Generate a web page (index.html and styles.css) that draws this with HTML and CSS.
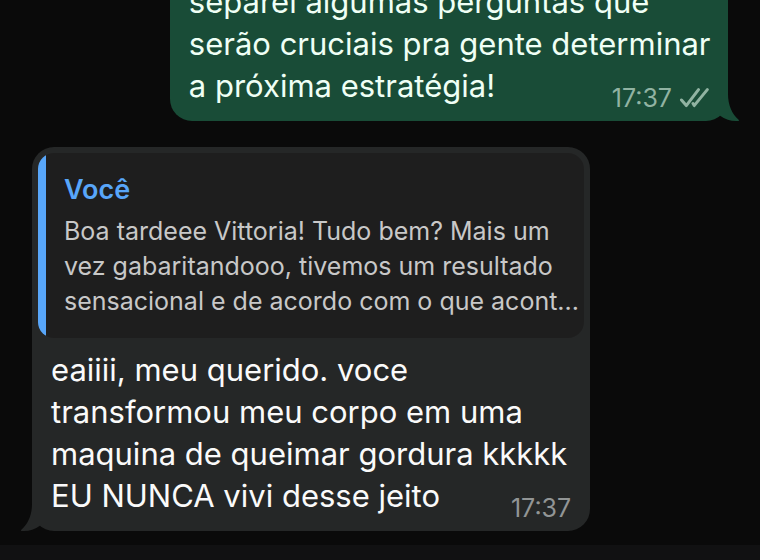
FILE: index.html
```html
<!DOCTYPE html>
<html lang="pt-BR">
<head>
<meta charset="utf-8">
<meta name="viewport" content="width=device-width, initial-scale=1">
<title>Conversa</title>
<link rel="stylesheet" href="styles.css">
</head>
<body>
<div class="screen">
  <main class="chat">
    <article class="bubble outgoing">
      <p class="message">separei algumas perguntas que<br>serão cruciais pra gente determinar<br>a próxima estratégia!</p>
      <div class="meta">
        <time>17:37</time>
        <svg class="checks" viewBox="0 0 30 20" aria-hidden="true">
          <path d="M2.5 12 L7.3 17.6 L19.5 1.6 M14 15.6 L15.2 17.6 L28.3 1.6"/>
        </svg>
      </div>
      <svg class="tail" viewBox="0 0 30 36" aria-hidden="true">
        <path d="M8 0 H18 V8 C18 19 22 28 28.4 33.4 Q30 35 27.5 35 Q18 35.5 10.5 30 L8 28 Z"/>
      </svg>
    </article>
    <article class="bubble incoming">
      <blockquote class="quote">
        <strong class="author">Você</strong>
        <p class="excerpt">Boa tardeee Vittoria! Tudo bem? Mais um<br>vez gabaritandooo, tivemos um resultado<br>sensacional e de acordo com o que acont...</p>
      </blockquote>
      <p class="message">eaiiii, meu querido. voce<br>transformou meu corpo em uma<br>maquina de queimar gordura kkkkk<br>EU NUNCA vivi desse jeito</p>
      <div class="meta"><time>17:37</time></div>
      <svg class="tail" viewBox="0 0 30 36" aria-hidden="true">
        <path d="M8 0 H18 V8 C18 19 22 28 28.4 33.4 Q30 35 27.5 35 Q18 35.5 10.5 30 L8 28 Z"/>
      </svg>
    </article>
  </main>
  <footer class="dock"></footer>
</div>
</body>
</html>
```
FILE: styles.css
```css
* {
  box-sizing: border-box;
}

body {
  margin: 0;
  background: #0a0a0a;
  color: #fafafa;
  font-family: Inter, "Liberation Sans", sans-serif;
}

p,
blockquote {
  margin: 0;
}

.screen {
  display: flex;
  flex-direction: column;
  height: 100vh;
  overflow: hidden;
}

.chat {
  flex: 1;
  display: flex;
  flex-direction: column;
  justify-content: flex-end;
  gap: 26px;
  min-height: 0;
  padding: 0 32px 14px;
}

.bubble {
  position: relative;
  flex: none;
  width: 80.2%;
  border-radius: 22px;
}

.outgoing {
  align-self: flex-end;
  padding: 14px 19px;
  background: #194c37;
  color: #effff5;
}

.incoming {
  padding: 6px 6px 14px;
  background: #252727;
}

.message {
  font-size: 31px;
  line-height: 42px;
  white-space: nowrap;
}

.incoming .message {
  padding: 11px 13px 0;
}

.meta {
  position: absolute;
  right: 19px;
  bottom: 9px;
  display: flex;
  align-items: center;
  gap: 7px;
  color: #929595;
  font-size: 25px;
  line-height: 28px;
}

.outgoing .meta {
  color: #91b3a2;
}

.checks {
  width: 30px;
  height: 20px;
  fill: none;
  stroke: currentColor;
  stroke-width: 3;
  stroke-linecap: round;
  stroke-linejoin: round;
}

.tail {
  position: absolute;
  right: -12px;
  bottom: -1px;
  width: 30px;
  height: 36px;
  fill: #194c37;
}

.incoming .tail {
  right: auto;
  left: -12px;
  fill: #252727;
  transform: scaleX(-1);
}

.quote {
  padding: 20px 18px 19px 26px;
  border-radius: 16px;
  background: linear-gradient(to right, #58a6f9 8px, #1e1e1e 8px);
}

.author {
  display: block;
  color: #58a6f9;
  font-size: 27px;
  font-weight: 600;
  line-height: 34px;
}

.excerpt {
  padding-top: 7px;
  color: #c8c8c8;
  font-size: 25px;
  line-height: 35px;
  white-space: nowrap;
}

.dock {
  flex: none;
  height: 15px;
  background: #111112;
}
```
